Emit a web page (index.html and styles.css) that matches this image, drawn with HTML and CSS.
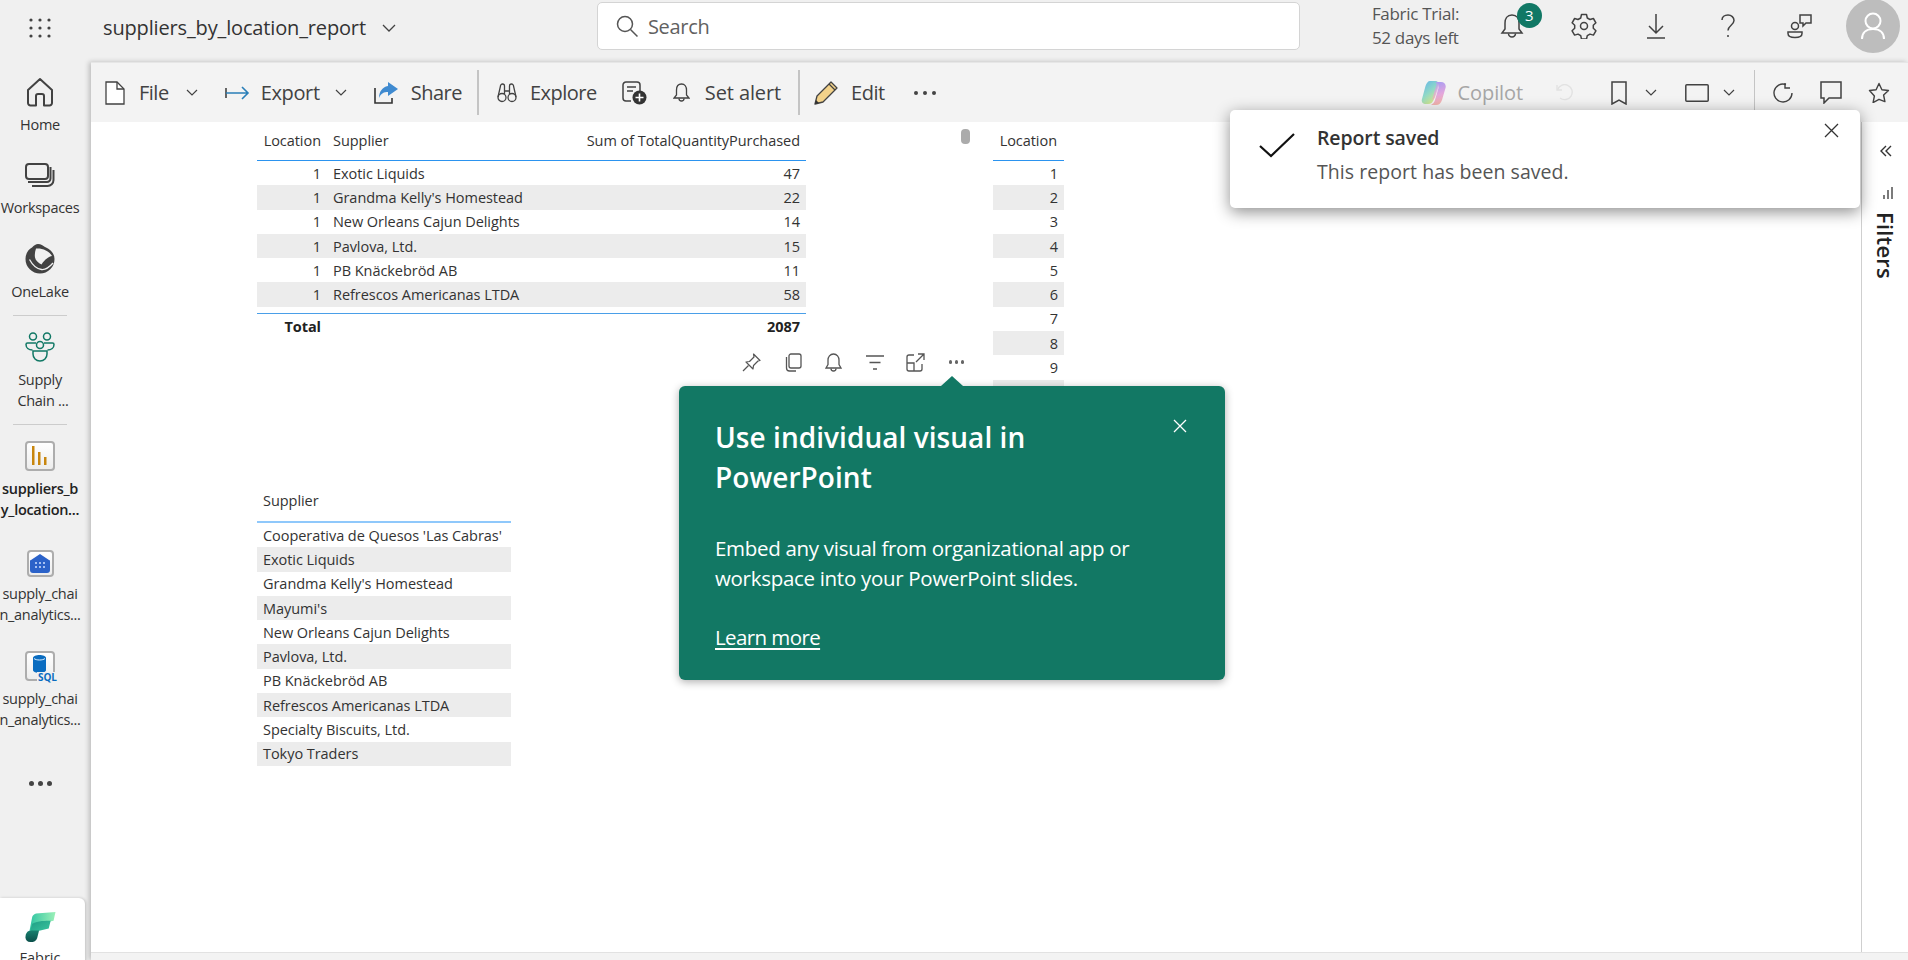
FILE: index.html
```html
<!DOCTYPE html>
<html lang="en">
<head>
    <meta charset="UTF-8">
    <title>suppliers_by_location_report</title>
    <link rel="stylesheet" href="styles.css">
</head>
<body>

    <header class="topbar">
        <svg class="waffle" width="22" height="20" viewBox="0 0 22 20" fill="#424242">
            <circle cx="2" cy="2" r="1.6"/><circle cx="11" cy="2" r="1.6"/><circle cx="20" cy="2" r="1.6"/>
            <circle cx="2" cy="10" r="1.6"/><circle cx="11" cy="10" r="1.6"/><circle cx="20" cy="10" r="1.6"/>
            <circle cx="2" cy="18" r="1.6"/><circle cx="11" cy="18" r="1.6"/><circle cx="20" cy="18" r="1.6"/>
        </svg>
        <div class="report-name">suppliers_by_location_report</div>
        <svg class="chev-top" width="14" height="8" viewBox="0 0 14 8" fill="none" stroke="#424242" stroke-width="1.3"><path d="M1 1l6 6 6-6"/></svg>
        <div class="search">
            <svg width="24" height="24" viewBox="0 0 24 24" fill="none" stroke="#555" stroke-width="1.5"><circle cx="10" cy="10" r="7.5"/><path d="M15.5 15.5l7 7"/></svg>
            <span>Search</span>
        </div>
        <div class="trial">Fabric Trial:<br>52 days left</div>
        <div class="top-icon bell-wrap">
            <svg width="24" height="26" viewBox="0 0 24 26" fill="none" stroke="#424242" stroke-width="1.5"><path d="M12 2c-5 0-7 4-7 8v6l-3 4h20l-3-4v-6c0-4-2-8-7-8z"/><path d="M8.500 20.500a3.500 3.500 0 0 0 7 0"/></svg>
            <span class="badge">3</span>
        </div>
        <div class="top-icon">
            <svg width="26" height="26" viewBox="0 0 26 26" fill="none" stroke="#424242" stroke-width="1.5"><path d="M10.500 1.500h5l.8 3.500 2.700 1.500 3.400-1 2.500 4.300-2.600 2.500v3l2.600 2.500-2.500 4.300-3.400-1-2.700 1.500-.8 3.500h-5l-.8-3.500-2.700-1.500-3.400 1-2.500-4.300 2.600-2.500v-3L1.100 9.800l2.500-4.300 3.400 1 2.700-1.500z" stroke-linejoin="round"/><circle cx="13" cy="13" r="3.500"/></svg>
        </div>
        <div class="top-icon">
            <svg width="20" height="26" viewBox="0 0 20 26" fill="none" stroke="#424242" stroke-width="1.5"><path d="M10 1v19M3 13l7 7 7-7M1 25h18"/></svg>
        </div>
        <div class="top-icon">
            <svg width="14" height="24" viewBox="0 0 14 24" fill="none" stroke="#424242" stroke-width="1.5"><path d="M1 6c0-3 2.500-5 6-5s6 2.500 6 5.500c0 4.500-6 5-6 10"/><circle cx="7" cy="22" r="1" fill="#424242" stroke="none"/></svg>
        </div>
        <div class="top-icon">
            <svg width="26" height="26" viewBox="0 0 26 26" fill="none" stroke="#424242" stroke-width="1.500"><circle cx="8" cy="13" r="3.500"/><path d="M1 19h14v1.500c0 2.500-3 4-7 4s-7-1.500-7-4z"/><path d="M13 2h11v8h-5l-3 3v-3h-3z"/></svg>
        </div>
        <div class="avatar">
            <svg width="24" height="28" viewBox="0 0 24 28" fill="none" stroke="#fff" stroke-width="2"><circle cx="12" cy="9" r="7.500"/><path d="M1 27c0-6 4-10 11-10s11 4 11 10"/></svg>
        </div>
    </header>

    <div class="shell">
        <nav class="rail">
            <div class="rail-item">
                <svg width="30" height="30" viewBox="0 0 30 30" fill="none" stroke="#424242" stroke-width="2" stroke-linejoin="round"><path d="M3 13L15 2l12 11v13a2.500 2.500 0 0 1-2.500 2.500H19V19a2 2 0 0 0-2-2h-4a2 2 0 0 0-2 2v9.500H5.500A2.500 2.500 0 0 1 3 26z"/></svg>
                <span>Home</span>
            </div>
            <div class="rail-item">
                <svg width="30" height="30" viewBox="0 0 30 30" fill="none" stroke="#424242" stroke-width="2"><rect x="1" y="3" width="22" height="15" rx="3"/><path d="M3 21h19a3.500 3.500 0 0 0 3.500-3.500V6"/><path d="M7 25h15.500a6 6 0 0 0 6-6V9"/></svg>
                <span>Workspaces</span>
            </div>
            <div class="rail-item">
                <svg width="30" height="30" viewBox="0 0 30 30"><path d="M13 0c3 0 5 1.500 7 3 5 2 9.500 6 9.500 12a14.500 14.500 0 0 1-29 0C.5 9 4 5 7 3.500 9 1.500 11 0 13 0z" fill="#424242"/><path d="M11 4.500c6-.5 13 2 16 7.500-3 .5-7 3-10.500 8.500-3-1.500-6-4-6.500-7-.5-3 0-6 1-9z" fill="#f0f0f0"/><path d="M4.500 15.500c3 5.500 7.500 9.500 12 10 4 .5 8-2.500 11.500-6.500" fill="none" stroke="#f0f0f0" stroke-width="1.300"/></svg>
                <span>OneLake</span>
            </div>
            <div class="rail-line"></div>
            <div class="rail-item">
                <svg width="30" height="30" viewBox="0 0 30 30" fill="none" stroke="#117865" stroke-width="1.500"><circle cx="8" cy="4.500" r="3.500"/><circle cx="22" cy="4.500" r="3.500"/><circle cx="15" cy="13" r="3.500"/><path d="M11 11H2.500c-1 0-1.500.5-1.500 1.500 0 3 2.500 5.500 6.500 5.500"/><path d="M19 11h8.500c1 0 1.500.5 1.500 1.500 0 3-2.500 5.500-6.500 5.500"/><path d="M8 19h14v3c0 4-3 7-7 7s-7-3-7-7z"/></svg>
                <span>Supply</span>
                <span class="shift">Chain ...</span>
            </div>
            <div class="rail-line"></div>
            <div class="rail-item report-item">
                <div class="item-box">
                    <svg width="16" height="20" viewBox="0 0 16 20" fill="#c8860e"><rect x="0" y="0" width="2.500" height="19"/><rect x="6" y="6" width="2.500" height="13"/><rect x="12" y="11" width="2.500" height="8"/></svg>
                </div>
                <span class="active">suppliers_b</span>
                <span class="active">y_location...</span>
            </div>
            <div class="rail-item">
                <div class="item-box small">
                    <svg width="20" height="19" viewBox="0 0 20 19"><path d="M10 0l9 6a1 1 0 0 1 1 1v9a3 3 0 0 1-3 3H3a3 3 0 0 1-3-3V7a1 1 0 0 1 1-1z" fill="#2b62c9"/><g fill="#cfe0ff"><circle cx="6" cy="9" r="1"/><circle cx="10" cy="9" r="1"/><circle cx="14" cy="9" r="1"/><circle cx="6" cy="13" r="1"/><circle cx="10" cy="13" r="1"/><circle cx="14" cy="13" r="1"/></g></svg>
                </div>
                <span>supply_chai</span>
                <span>n_analytics...</span>
            </div>
            <div class="rail-item">
                <div class="item-box">
                    <svg class="cyl" width="13" height="18" viewBox="0 0 13 18"><path d="M0 3c0-4 13-4 13 0v12c0 4-13 4-13 0z" fill="#0a6cc0"/><path d="M1 3.500c2 2 9 2 11 0" fill="none" stroke="#d8ecff" stroke-width="1"/></svg>
                    <b class="sql">SQL</b>
                </div>
                <span>supply_chai</span>
                <span>n_analytics...</span>
            </div>
            <div class="rail-more"><i></i><i></i><i></i></div>
            <div class="rail-tile">
                <svg width="32" height="32" viewBox="0 0 32 32">
                    <defs>
                        <linearGradient id="fa" x1="0" y1="0" x2="1" y2="0"><stop offset="0" stop-color="#2fc4a2"/><stop offset="1" stop-color="#9cf0b8"/></linearGradient>
                        <linearGradient id="fb" x1="0" y1="0" x2="1" y2="1"><stop offset="0" stop-color="#1f9c84"/><stop offset="1" stop-color="#3cc8a0"/></linearGradient>
                        <linearGradient id="fc" x1="0" y1="0" x2="0" y2="1"><stop offset="0" stop-color="#17806f"/><stop offset="1" stop-color="#0b4f4a"/></linearGradient>
                    </defs>
                    <path d="M5 20L8 5c1-2 2-3 4-3.500L32 0l-2 9-16 3z" fill="url(#fa)"/>
                    <path d="M5 22l3-10c6-3 14-3 19-3l-2 8-13 3z" fill="url(#fb)"/>
                    <path d="M1 26c0-4 2-7 6-7h8l-2 8c-1 3-3 4-7 4-3 0-5-2-5-5z" fill="url(#fc)"/>
                </svg>
                <span>Fabric</span>
            </div>
        </nav>

        <main class="main">
            <div class="toolbar">
                <div class="tool">
                    <svg width="20" height="24" viewBox="0 0 20 24" fill="#fff" stroke="#424242" stroke-width="1.300"><path d="M1 1h11l7 7v15H1z"/><path d="M12 1v7h7" fill="none"/></svg>
                    <span class="tlabel file-l">File</span>
                    <svg class="chev" width="12" height="7" viewBox="0 0 12 7" fill="none" stroke="#424242" stroke-width="1.200"><path d="M1 1l5 5 5-5"/></svg>
                </div>
                <div class="tool m-27">
                    <svg width="25" height="16" viewBox="0 0 25 16" fill="none" stroke="#2a7fb8" stroke-width="1.600"><path d="M1 3v10" stroke="#424242"/><path d="M1 8h22M17 2l6 6-6 6"/></svg>
                    <span class="tlabel export-l">Export</span>
                    <svg class="chev export-chev" width="12" height="7" viewBox="0 0 12 7" fill="none" stroke="#424242" stroke-width="1.200"><path d="M1 1l5 5 5-5"/></svg>
                </div>
                <div class="tool m-27">
                    <svg width="24" height="24" viewBox="0 0 24 24"><path d="M1 7v15h17v-5" fill="none" stroke="#333" stroke-width="1.600"/><path d="M14 1l10 7-10 7v-4c-4 0-7 1-9 6 0-6 3-11 9-12z" fill="#3f8ad0"/></svg>
                    <span class="tlabel share-l">Share</span>
                </div>
                <div class="tsep"></div>
                <div class="tool">
                    <svg width="20" height="20" viewBox="0 0 20 20" fill="none" stroke="#424242" stroke-width="1.300"><circle cx="5" cy="14.500" r="4"/><circle cx="15" cy="14.500" r="4"/><path d="M1 14L3.500 3a2 2 0 0 1 4 0V11M19 14L16.500 3a2 2 0 0 0-4 0V11M7.500 8h5"/></svg>
                    <span class="tlabel explore-l">Explore</span>
                </div>
                <svg class="m-25" width="25" height="24" viewBox="0 0 25 24"><path d="M9 20H4a3 3 0 0 1-3-3V4a3 3 0 0 1 3-3h11a3 3 0 0 1 3 3v6" fill="none" stroke="#424242" stroke-width="1.500"/><path d="M5 6h9M5 10h6" stroke="#424242" stroke-width="1.300"/><circle cx="17.500" cy="16.500" r="7" fill="#333"/><path d="M17.500 12.500v8M13.500 16.500h8" stroke="#fff" stroke-width="1.600"/></svg>
                <div class="tool m-26">
                    <svg width="17" height="20" viewBox="0 0 17 20" fill="none" stroke="#424242" stroke-width="1.300"><path d="M8.500 1C5 1 3.500 4 3.500 7v5L1 15h15l-2.500-3V7c0-3-1.500-6-5-6z"/><path d="M6 15.500a2.500 2.500 0 0 0 5 0"/></svg>
                    <span class="tlabel alert-l">Set alert</span>
                </div>
                <div class="tsep second"></div>
                <div class="tool">
                    <svg width="25" height="25" viewBox="0 0 25 25"><path d="M1 24l2-8L17 2l6 6L9 22z" fill="#f3d28a" stroke="#424242" stroke-width="1.300" stroke-linejoin="round"/><path d="M15 4l6 6" stroke="#424242" stroke-width="1.300"/><path d="M1 24l1-4 3 3z" fill="#333"/></svg>
                    <span class="tlabel edit-l">Edit</span>
                </div>
                <div class="tdots"><i></i><i></i><i></i></div>

                <div class="tool right-start">
                    <svg width="25" height="24" viewBox="0 0 25 24">
                        <defs>
                            <linearGradient id="ca" x1="0" y1="0" x2="0.6" y2="1"><stop offset="0" stop-color="#62b4ea"/><stop offset=".55" stop-color="#8fd8c8"/><stop offset="1" stop-color="#d8e88a"/></linearGradient>
                            <linearGradient id="cb" x1="0.4" y1="0" x2="0.6" y2="1"><stop offset="0" stop-color="#a99cf2"/><stop offset=".55" stop-color="#e3a6dc"/><stop offset="1" stop-color="#f6b6a4"/></linearGradient>
                        </defs>
                        <path d="M9 0h5c3 0 4 2 3 4l-4 14c-1 3-3 5-6 5H5c-3 0-5-2-4-5L4.500 5C5.500 2 7 0 9 0z" fill="url(#ca)"/>
                        <path d="M14 1h6c3.500 0 5.500 3 4.500 6L21 19c-1 3-3 5-6 5h-5c2-1 3.500-3 4-5l3.500-12c.7-3-.5-5-3.500-6z" fill="url(#cb)"/>
                        <path d="M15 5l-4 14c2-1 3-2 3.500-4L18 5c.5-2-1-3-3-4 .7 1 .3 2.500 0 4z" fill="url(#cb)" opacity=".75"/>
                    </svg>
                    <span class="tlabel off copilot-l">Copilot</span>
                </div>
                <svg class="m-33" width="17" height="17" viewBox="0 0 17 17" fill="none" stroke="#e2e2e2" stroke-width="1.400"><path d="M1 1v5h5"/><path d="M1.500 6A7.500 7.500 0 1 1 4 14"/></svg>
                <svg class="m-38" width="16" height="24" viewBox="0 0 16 24" fill="none" stroke="#424242" stroke-width="1.500"><path d="M1 1h14v22l-7-4-7 4z"/></svg>
                <svg class="m-18" width="12" height="7" viewBox="0 0 12 7" fill="none" stroke="#424242" stroke-width="1.200"><path d="M1 1l5 5 5-5"/></svg>
                <svg class="m-28" width="24" height="18" viewBox="0 0 24 18" fill="none" stroke="#424242" stroke-width="1.500"><rect x=".8" y=".8" width="22.400" height="16.400" rx="1"/></svg>
                <svg class="m-14" width="12" height="7" viewBox="0 0 12 7" fill="none" stroke="#424242" stroke-width="1.200"><path d="M1 1l5 5 5-5"/></svg>
                <div class="tsep thin"></div>
                <svg class="m-18" width="20" height="22" viewBox="0 0 20 22" fill="none" stroke="#424242" stroke-width="1.400"><path d="M13 2.500A9 9 0 1 0 19 11"/><path d="M12 1v5h5" /></svg>
                <svg class="m-27" width="22" height="23" viewBox="0 0 22 23" fill="none" stroke="#424242" stroke-width="1.500"><path d="M1 1h20v16H9l-5 5v-5H1z"/></svg>
                <svg class="m-26" width="22" height="21" viewBox="0 0 22 21" fill="none" stroke="#424242" stroke-width="1.400" stroke-linejoin="round"><path d="M11 1.500l2.900 6.200 6.600.8-4.900 4.500 1.300 6.600L11 17.300 5.100 20.600l1.300-6.600L1.500 8.500l6.600-.8z"/></svg>
            </div>

            <div class="work">
                <div class="canvas">
                    <!-- visuals sit freely on the report canvas -->
                    <div class="visual v-main">
                        <div class="thead">
                            <div class="c-loc">Location</div>
                            <div class="c-sup">Supplier</div>
                            <div class="c-val">Sum of TotalQuantityPurchased</div>
                        </div>
                        <div class="trow"><div class="c-loc">1</div><div class="c-sup">Exotic Liquids</div><div class="c-val">47</div></div>
                        <div class="trow"><div class="c-loc">1</div><div class="c-sup">Grandma Kelly's Homestead</div><div class="c-val">22</div></div>
                        <div class="trow"><div class="c-loc">1</div><div class="c-sup">New Orleans Cajun Delights</div><div class="c-val">14</div></div>
                        <div class="trow"><div class="c-loc">1</div><div class="c-sup">Pavlova, Ltd.</div><div class="c-val">15</div></div>
                        <div class="trow"><div class="c-loc">1</div><div class="c-sup">PB Knäckebröd AB</div><div class="c-val">11</div></div>
                        <div class="trow"><div class="c-loc">1</div><div class="c-sup">Refrescos Americanas LTDA</div><div class="c-val">58</div></div>
                        <div class="ttotal">
                            <div class="c-loc">Total</div>
                            <div class="c-sup"></div>
                            <div class="c-val">2087</div>
                        </div>
                    </div>

                    <div class="scroll-thumb"></div>

                    <div class="visual-head">
                        <svg width="19" height="19" viewBox="0 0 19 19" fill="none" stroke="#555" stroke-width="1.200"><path d="M11.500 1l6.500 6.500-2 .5-4.500 4.500-.5 3.500L4 9l3.500-.5L12 4z" stroke-linejoin="round"/><path d="M6.500 12.500L1 18"/></svg>
                        <svg width="18" height="19" viewBox="0 0 18 19" fill="none" stroke="#555" stroke-width="1.300"><rect x="5" y="1" width="12" height="14" rx="2"/><path d="M2.500 4v11a3 3 0 0 0 3 3H12"/></svg>
                        <svg width="17" height="19" viewBox="0 0 17 19" fill="none" stroke="#555" stroke-width="1.300"><path d="M8.500 1C5 1 3 4 3 7v4.500L1 15h15l-2-3.500V7c0-3-2-6-5.500-6z"/><path d="M6 15.500a2.500 2.500 0 0 0 5 0"/></svg>
                        <svg width="18" height="15" viewBox="0 0 18 15" fill="none" stroke="#555" stroke-width="1.300"><path d="M0 1h18M3.500 7.500h11M7 14h4"/></svg>
                        <svg width="19" height="19" viewBox="0 0 19 19" fill="none" stroke="#555" stroke-width="1.300"><path d="M8 2H3a2 2 0 0 0-2 2v12a2 2 0 0 0 2 2h11a2 2 0 0 0 2-2v-5"/><path d="M1 10h7v8"/><path d="M10 9l8-8M12 1h6v6"/></svg>
                        <div class="vh-dots"><i></i><i></i><i></i></div>
                    </div>

                    <div class="visual v-loc">
                        <div class="thead"><div class="c-one">Location</div></div>
                        <div class="trow"><div class="c-one">1</div></div>
                        <div class="trow"><div class="c-one">2</div></div>
                        <div class="trow"><div class="c-one">3</div></div>
                        <div class="trow"><div class="c-one">4</div></div>
                        <div class="trow"><div class="c-one">5</div></div>
                        <div class="trow"><div class="c-one">6</div></div>
                        <div class="trow"><div class="c-one">7</div></div>
                        <div class="trow"><div class="c-one">8</div></div>
                        <div class="trow"><div class="c-one">9</div></div>
                        <div class="trow"></div>
                    </div>

                    <div class="visual v-sup">
                        <div class="thead"><div class="c-left">Supplier</div></div>
                        <div class="trow"><div class="c-left">Cooperativa de Quesos 'Las Cabras'</div></div>
                        <div class="trow"><div class="c-left">Exotic Liquids</div></div>
                        <div class="trow"><div class="c-left">Grandma Kelly's Homestead</div></div>
                        <div class="trow"><div class="c-left">Mayumi's</div></div>
                        <div class="trow"><div class="c-left">New Orleans Cajun Delights</div></div>
                        <div class="trow"><div class="c-left">Pavlova, Ltd.</div></div>
                        <div class="trow"><div class="c-left">PB Knäckebröd AB</div></div>
                        <div class="trow"><div class="c-left">Refrescos Americanas LTDA</div></div>
                        <div class="trow"><div class="c-left">Specialty Biscuits, Ltd.</div></div>
                        <div class="trow"><div class="c-left">Tokyo Traders</div></div>
                    </div>

                    <div class="teach">
                        <div class="teach-title">Use individual visual in<br>PowerPoint</div>
                        <svg class="teach-close" width="14" height="14" viewBox="0 0 14 14" fill="none" stroke="#fff" stroke-width="1.300"><path d="M1 1l12 12M13 1L1 13"/></svg>
                        <div class="teach-body">Embed any visual from organizational app or<br>workspace into your PowerPoint slides.</div>
                        <a class="teach-link">Learn more</a>
                    </div>
                </div>

                <aside class="filters">
                    <svg class="f-collapse" width="12" height="12" viewBox="0 0 12 12" fill="none" stroke="#333" stroke-width="1.400"><path d="M6 1L1 6l5 5M11 1L6 6l5 5"/></svg>
                    <svg class="f-icon" width="10" height="12" viewBox="0 0 10 12" fill="none" stroke="#444" stroke-width="1.400"><path d="M9 0v12M5 3v9M1 8v4"/></svg>
                    <div class="f-label">Filters</div>
                </aside>
            </div>

            <div class="strip"></div>

            <div class="toast">
                <svg class="toast-check" width="36" height="25" viewBox="0 0 36 25" fill="none" stroke="#111" stroke-width="2.200"><path d="M1 13l11 10L35 1"/></svg>
                <div>
                    <div class="toast-title">Report saved</div>
                    <div class="toast-text">This report has been saved.</div>
                </div>
                <svg class="toast-close" width="15" height="15" viewBox="0 0 15 15" fill="none" stroke="#333" stroke-width="1.300"><path d="M1 1l13 13M14 1L1 14"/></svg>
            </div>
        </main>
    </div>

</body>
</html>
```

FILE: styles.css
```css
* {
    box-sizing: border-box;
}
html, body {
    margin: 0;
    height: 100%;
    overflow: hidden;
}
body {
    font-family: "Open Sans", "Noto Sans", sans-serif;
    color: #333;
    background-color: #f0f0f0;
    display: flex;
    flex-direction: column;
}

/* top bar */
.topbar {
    height: 62px;
    flex: none;
    display: flex;
    align-items: center;
    position: relative;
}
.waffle {
    margin-left: 29px;
    margin-top: -6px;
}
.report-name {
    margin-left: 52px;
    font-size: 20px;
    letter-spacing: -0.15px;
    margin-top: -8px;
}
.chev-top {
    margin-left: 16px;
    margin-top: -6px;
}
.search {
    margin-left: 201px;
    width: 703px;
    height: 48px;
    margin-top: -10px;
    background-color: #fff;
    border: 1px solid #d4d4d4;
    border-radius: 5px;
    display: flex;
    align-items: center;
    gap: 9px;
    padding-left: 17px;
    color: #616161;
    font-size: 20px;
    letter-spacing: -0.3px;
}
.trial {
    margin-left: 72px;
    margin-top: -10px;
    width: 100px;
    font-size: 17px;
    line-height: 24px;
    letter-spacing: -0.3px;
    color: #555;
    white-space: nowrap;
}
.top-icon {
    width: 72px;
    margin-top: -10px;
    display: flex;
    justify-content: center;
    position: relative;
}
.bell-wrap {
    margin-left: 4px;
}
.badge {
    position: absolute;
    left: 41px;
    top: -10px;
    width: 25px;
    height: 25px;
    border-radius: 50%;
    background-color: #117865;
    color: #fff;
    font-size: 15px;
    text-align: center;
    line-height: 25px;
}
.avatar {
    position: absolute;
    left: 1846px;
    top: -1px;
    width: 54px;
    height: 54px;
    border-radius: 50%;
    background-color: #bdbdbd;
    display: flex;
    align-items: center;
    justify-content: center;
}

/* left rail */
.shell {
    flex: 1;
    display: flex;
    min-height: 0;
}
.rail {
    width: 91px;
    flex: none;
    padding: 15px 11px 0 0;
    display: flex;
    flex-direction: column;
    align-items: center;
    position: relative;
    overflow: hidden;
}
.rail-item {
    width: 100%;
    display: flex;
    flex-direction: column;
    align-items: center;
    font-size: 14.5px;
    line-height: 21px;
    letter-spacing: -0.3px;
    white-space: nowrap;
    margin-bottom: 26px;
}
.report-item {
    margin-bottom: 27px;
}
.rail-item > svg, .item-box {
    margin-bottom: 6.5px;
}
.rail-line {
    width: 54px;
    height: 1px;
    flex: none;
    background-color: #ccc;
    margin: -12.5px 0 16px;
}
.shift {
    margin-left: 6px;
}
.active {
    font-weight: 600;
    color: #222;
}
.item-box {
    width: 30px;
    height: 30px;
    flex: none;
    border: 2px solid #adadad;
    border-radius: 4px;
    background: linear-gradient(#fff, #ededed);
    display: flex;
    align-items: center;
    justify-content: center;
    position: relative;
}
.item-box.small {
    width: 27px;
    height: 27px;
    margin-top: 3px;
}
.cyl {
    margin-top: -4px;
    margin-left: -1px;
}
.sql {
    position: absolute;
    right: -5px;
    bottom: -4px;
    font-size: 10px;
    line-height: 11px;
    letter-spacing: 0;
    color: #0a6cc0;
    background-color: #f0f0f0;
    padding: 0 1px;
}
.rail-more {
    display: flex;
    gap: 4px;
    margin-top: 25px;
}
.rail-more i, .tdots i, .vh-dots i {
    display: block;
    border-radius: 50%;
    background-color: #444;
}
.rail-more i {
    width: 5px;
    height: 5px;
}
.rail-tile {
    position: absolute;
    left: 0;
    top: 836px;
    width: 85px;
    height: 70px;
    background-color: #fff;
    border-top-right-radius: 6px;
    box-shadow: 1px 0 3px rgba(0, 0, 0, 0.18);
    display: flex;
    flex-direction: column;
    align-items: center;
    padding: 14px 5px 0 0;
    font-size: 14.5px;
    line-height: 21px;
    gap: 4px;
}

/* main area */
.main {
    flex: 1;
    min-width: 0;
    display: flex;
    flex-direction: column;
    position: relative;
    background-color: #fff;
    box-shadow: -2px 0 5px rgba(0, 0, 0, 0.22);
}
.toolbar {
    height: 60px;
    flex: none;
    background-color: #f3f3f3;
    border-top: 1px solid #e6e6e6;
    display: flex;
    align-items: center;
    padding-left: 14px;
    color: #424242;
    font-size: 20px;
    letter-spacing: -0.5px;
}
.tool {
    display: flex;
    align-items: center;
}
.tlabel {
    white-space: nowrap;
}
.file-l { margin-left: 14px; }
.export-l { margin-left: 11px; letter-spacing: -0.35px; }
.share-l { margin-left: 13px; }
.explore-l { margin-left: 13px; }
.alert-l { margin-left: 15px; letter-spacing: -0.1px; }
.edit-l { margin-left: 12px; }
.copilot-l { margin-left: 12px; letter-spacing: -0.1px; }
.chev {
    margin-left: 17px;
}
.export-chev {
    margin-left: 15px;
}
.m-14 { margin-left: 14px; }
.m-18 { margin-left: 18px; }
.m-25 { margin-left: 25px; }
.m-26 { margin-left: 26px; }
.m-27 { margin-left: 27px; }
.m-28 { margin-left: 28px; }
.m-33 { margin-left: 33px; }
.m-38 { margin-left: 38px; }
.tsep {
    width: 2px;
    height: 45px;
    background-color: #c4c4c4;
    margin-left: 15px;
    margin-right: 18px;
}
.tsep.second {
    margin-left: 17px;
    margin-right: 14px;
}
.tsep.thin {
    width: 1px;
    margin-left: 19px;
    margin-right: 0;
}
.tdots {
    display: flex;
    gap: 5px;
    margin-left: 29px;
}
.tdots i {
    width: 4px;
    height: 4px;
}
.right-start {
    margin-left: auto;
}
.off {
    color: #a6a6a6;
}
.toolbar > svg:last-child {
    margin-right: 18px;
}

.work {
    flex: 1;
    display: flex;
    min-height: 0;
}
.canvas {
    flex: 1;
    position: relative;
    overflow: hidden;
}
.filters {
    width: 47px;
    flex: none;
    border-left: 1px solid #cfcfcf;
    position: relative;
    display: flex;
    flex-direction: column;
    align-items: center;
    padding: 23px 0 0 1px;
}
.f-icon {
    margin-top: 30px;
    margin-left: 4px;
}
.f-label {
    margin-top: 13px;
    writing-mode: vertical-rl;
    font-size: 22px;
    font-weight: 600;
    color: #222;
    letter-spacing: 0.2px;
}
.strip {
    height: 8px;
    flex: none;
    background-color: #f3f3f3;
    border-top: 1px solid #e2e2e2;
}

/* table visuals */
.visual {
    position: absolute;
    font-size: 14.5px;
    letter-spacing: -0.05px;
    color: #333;
}
.v-main {
    left: 166px;
    top: 0;
    width: 549px;
}
.v-loc {
    left: 902px;
    top: 0;
    width: 71px;
}
.v-sup {
    left: 166px;
    top: 361px;
    width: 254px;
}
.thead {
    height: 39px;
    display: flex;
    align-items: center;
    border-bottom: 1px solid #2b93ef;
    padding-bottom: 2px;
}
.v-sup .thead {
    height: 40px;
    border-bottom: 2px solid #8fc8fb;
    padding-bottom: 3px;
}
.trow {
    height: 24.3px;
    display: flex;
    align-items: center;
}
.trow:nth-child(odd) {
    background-color: #ececec;
}
.c-loc {
    width: 70px;
    padding-right: 6px;
    text-align: right;
}
.c-sup {
    width: 200px;
    padding-left: 6px;
    white-space: nowrap;
}
.c-val {
    flex: 1;
    text-align: right;
    padding-right: 6px;
    white-space: nowrap;
}
.c-one {
    width: 100%;
    text-align: right;
    padding-right: 6px;
    white-space: nowrap;
}
.thead .c-one {
    padding-right: 7px;
}
.c-left {
    padding-left: 6px;
    white-space: nowrap;
}
.ttotal {
    margin-top: 6px;
    height: 26px;
    border-top: 1px solid #4a9fe8;
    display: flex;
    align-items: center;
    font-weight: 700;
    color: #222;
}
.scroll-thumb {
    position: absolute;
    left: 870px;
    top: 7px;
    width: 9px;
    height: 15px;
    border-radius: 4px;
    background-color: #ababab;
}
.visual-head {
    position: absolute;
    left: 640px;
    top: 230px;
    height: 20px;
    display: grid;
    grid-auto-flow: column;
    grid-auto-columns: 41px;
    justify-items: center;
    align-items: center;
}
.vh-dots {
    display: flex;
    gap: 2.5px;
}
.vh-dots i {
    width: 3.500px;
    height: 3.500px;
    background-color: #666;
}

/* teaching bubble */
.teach {
    position: absolute;
    left: 588px;
    top: 264px;
    width: 546px;
    height: 294px;
    background-color: #127864;
    border-radius: 6px;
    box-shadow: 0 2px 9px rgba(0, 0, 0, 0.32);
    color: #fff;
    padding: 31px 36px;
}
.teach::before {
    content: "";
    position: absolute;
    left: 262px;
    top: -10px;
    border-left: 11px solid transparent;
    border-right: 11px solid transparent;
    border-bottom: 10px solid #127864;
}
.teach-title {
    font-size: 28px;
    line-height: 40px;
    font-weight: 600;
    letter-spacing: 0.05px;
    white-space: nowrap;
}
.teach-close {
    position: absolute;
    left: 494px;
    top: 33px;
}
.teach-body {
    margin-top: 36px;
    font-size: 20.500px;
    line-height: 30px;
    letter-spacing: -0.3px;
    white-space: nowrap;
}
.teach-link {
    display: inline-block;
    margin-top: 29px;
    font-size: 20.500px;
    line-height: 30px;
    letter-spacing: -0.6px;
    text-decoration: underline;
    text-underline-offset: 3px;
}

/* toast */
.toast {
    position: absolute;
    left: 1139px;
    top: 48px;
    width: 630px;
    height: 98px;
    background-color: #fff;
    border-radius: 5px;
    box-shadow: 0 4px 16px rgba(0, 0, 0, 0.45);
    display: flex;
    padding-top: 13px;
    padding-left: 29px;
}
.toast-check {
    margin-top: 10px;
    margin-right: 22px;
}
.toast-title {
    font-size: 19.500px;
    line-height: 30px;
    font-weight: 600;
    letter-spacing: -0.1px;
    color: #333;
}
.toast-text {
    margin-top: 4px;
    font-size: 19.500px;
    line-height: 30px;
    letter-spacing: 0.05px;
    color: #555;
}
.toast-close {
    position: absolute;
    left: 594px;
    top: 13px;
}
```
